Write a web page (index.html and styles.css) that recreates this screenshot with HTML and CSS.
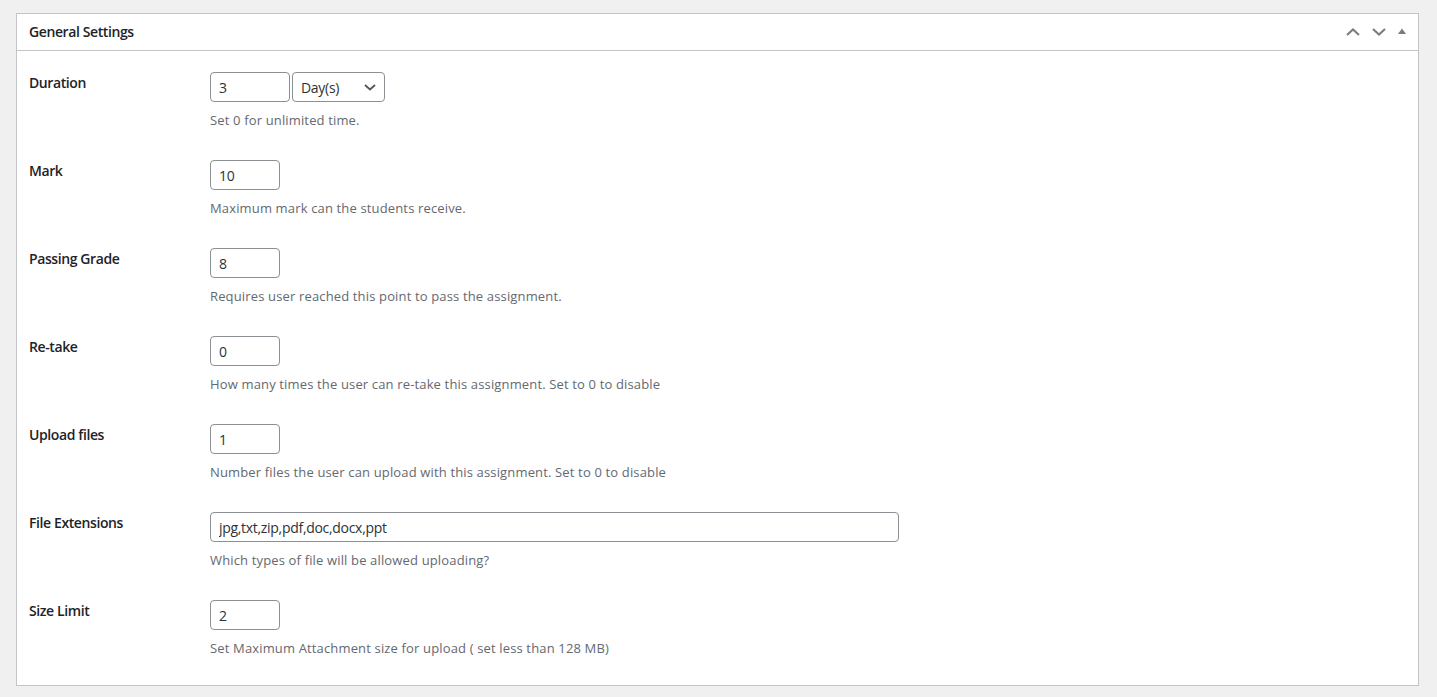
FILE: index.html
```html
<!DOCTYPE html>
<html>
<head>
<meta charset="utf-8">
<link rel="stylesheet" href="styles.css">
</head>
<body>
<div class="postbox">
  <div class="postbox-header">
    <h2 class="hndle">General Settings</h2>
    <div class="handle-actions">
      <button class="handle-btn" aria-label="Move up">
        <svg width="14" height="8" viewBox="0 0 14 8"><path d="M1 7 L7 1.4 L13 7" fill="none" stroke="#787c82" stroke-width="2"/></svg>
      </button>
      <button class="handle-btn" aria-label="Move down">
        <svg width="14" height="8" viewBox="0 0 14 8"><path d="M1 1 L7 6.6 L13 1" fill="none" stroke="#787c82" stroke-width="2"/></svg>
      </button>
      <button class="handle-btn toggle" aria-label="Toggle panel">
        <svg width="8" height="6" viewBox="0 0 8 6"><path d="M0 6 L4 0.5 L8 6 Z" fill="#787c82"/></svg>
      </button>
    </div>
  </div>
  <div class="inside">
    <div class="field">
      <label class="field-label">Duration</label>
      <div class="field-input">
        <div class="inline">
          <input class="num w80" type="text" value="3">
          <div class="select">
            <span>Day(s)</span>
            <svg width="20" height="20" viewBox="0 0 20 20"><path d="M5 8 L10 12.5 L15 8" fill="none" stroke="#50575e" stroke-width="1.8"/></svg>
          </div>
        </div>
        <p class="description">Set 0 for unlimited time.</p>
      </div>
    </div>
    <div class="field">
      <label class="field-label">Mark</label>
      <div class="field-input">
        <input class="num w70" type="text" value="10">
        <p class="description">Maximum mark can the students receive.</p>
      </div>
    </div>
    <div class="field">
      <label class="field-label">Passing Grade</label>
      <div class="field-input">
        <input class="num w70" type="text" value="8">
        <p class="description">Requires user reached this point to pass the assignment.</p>
      </div>
    </div>
    <div class="field">
      <label class="field-label">Re-take</label>
      <div class="field-input">
        <input class="num w70" type="text" value="0">
        <p class="description">How many times the user can re-take this assignment. Set to 0 to disable</p>
      </div>
    </div>
    <div class="field">
      <label class="field-label">Upload files</label>
      <div class="field-input">
        <input class="num w70" type="text" value="1">
        <p class="description">Number files the user can upload with this assignment. Set to 0 to disable</p>
      </div>
    </div>
    <div class="field">
      <label class="field-label">File Extensions</label>
      <div class="field-input">
        <input class="text wide" type="text" value="jpg,txt,zip,pdf,doc,docx,ppt">
        <p class="description">Which types of file will be allowed uploading?</p>
      </div>
    </div>
    <div class="field">
      <label class="field-label">Size Limit</label>
      <div class="field-input">
        <input class="num w70" type="text" value="2">
        <p class="description">Set Maximum Attachment size for upload ( set less than 128 MB)</p>
      </div>
    </div>
  </div>
</div>
</body>
</html>
```
FILE: styles.css
```css
html, body {
  background: #f0f0f1;
}
body {
  margin: 13px 18px 0 16px;
  font-family: "Open Sans", "Noto Sans", sans-serif;
  color: #1d2327;
  font-size: 13px;
}
.postbox {
  background: #fff;
  border: 1px solid #c3c4c7;
  box-shadow: 0 1px 1px rgba(0,0,0,0.04);
  height: 671px;
  box-sizing: content-box;
}
.postbox-header {
  display: flex;
  align-items: center;
  justify-content: space-between;
  height: 36px;
  border-bottom: 1px solid #c3c4c7;
  padding: 0 0 0 12px;
}
.hndle {
  margin: 0;
  font-size: 14px;
  font-weight: 600;
  letter-spacing: -0.4px;
  line-height: 36px;
  color: #1d2327;
}
.handle-actions {
  display: flex;
  align-items: center;
  height: 36px;
  padding-right: 6px;
}
.handle-btn {
  border: 0;
  background: none;
  padding: 0;
  margin: 0;
  width: 26px;
  height: 36px;
  display: flex;
  align-items: center;
  justify-content: center;
}
.handle-btn.toggle {
  width: 20px;
  padding-bottom: 2px;
}
.inside {
  padding: 21px 12px 0 12px;
}
.field {
  display: flex;
  height: 88px;
}
.field-label {
  width: 181px;
  flex: none;
  font-size: 14px;
  font-weight: 600;
  letter-spacing: -0.4px;
  line-height: 22px;
  color: #1d2327;
}
.field-input {
  flex: 1;
}
.inline {
  display: flex;
  gap: 2px;
}
input {
  box-sizing: border-box;
  height: 30px;
  border: 1px solid #8c8f94;
  border-radius: 4px;
  padding: 0 8px;
  font-family: inherit;
  font-size: 14px;
  letter-spacing: -0.3px;
  color: #2c3338;
  background: #fff;
  display: block;
  margin: 0;
}
.w80 { width: 80px; }
.w70 { width: 70px; }
.wide { width: 689px; }
.select {
  box-sizing: border-box;
  width: 93px;
  height: 30px;
  border: 1px solid #8c8f94;
  border-radius: 4px;
  padding: 0 4px 0 8px;
  display: flex;
  align-items: center;
  justify-content: space-between;
  font-size: 14px;
  letter-spacing: -0.3px;
  color: #2c3338;
}
.description {
  margin: 9px 0 0 0;
  font-size: 13px;
  letter-spacing: 0.15px;
  line-height: 19.5px;
  color: #646970;
}
```
